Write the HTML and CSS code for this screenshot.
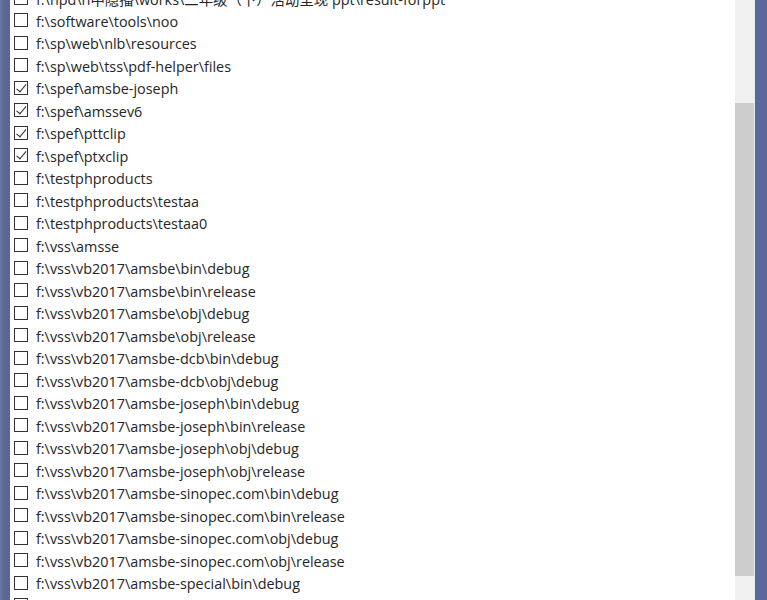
FILE: index.html
```html
<!DOCTYPE html>
<html>
<head>
<meta charset="utf-8">
<link rel="stylesheet" href="styles.css">
</head>
<body>
<div class="frame">
  <div class="edge edge-left"></div>
  <div class="list">
    <ul class="items">
      <li class="item"><span class="box"></span><span class="label">f:\hpd\n中隐播\works\二年级（下）活动呈现 ppt\result-forppt</span></li>
      <li class="item"><span class="box"></span><span class="label">f:\software\tools\noo</span></li>
      <li class="item"><span class="box"></span><span class="label">f:\sp\web\nlb\resources</span></li>
      <li class="item"><span class="box"></span><span class="label">f:\sp\web\tss\pdf-helper\files</span></li>
      <li class="item"><span class="box checked"></span><span class="label">f:\spef\amsbe-joseph</span></li>
      <li class="item"><span class="box checked"></span><span class="label">f:\spef\amssev6</span></li>
      <li class="item"><span class="box checked"></span><span class="label">f:\spef\pttclip</span></li>
      <li class="item"><span class="box checked"></span><span class="label">f:\spef\ptxclip</span></li>
      <li class="item"><span class="box"></span><span class="label">f:\testphproducts</span></li>
      <li class="item"><span class="box"></span><span class="label">f:\testphproducts\testaa</span></li>
      <li class="item"><span class="box"></span><span class="label">f:\testphproducts\testaa0</span></li>
      <li class="item"><span class="box"></span><span class="label">f:\vss\amsse</span></li>
      <li class="item"><span class="box"></span><span class="label">f:\vss\vb2017\amsbe\bin\debug</span></li>
      <li class="item"><span class="box"></span><span class="label">f:\vss\vb2017\amsbe\bin\release</span></li>
      <li class="item"><span class="box"></span><span class="label">f:\vss\vb2017\amsbe\obj\debug</span></li>
      <li class="item"><span class="box"></span><span class="label">f:\vss\vb2017\amsbe\obj\release</span></li>
      <li class="item"><span class="box"></span><span class="label">f:\vss\vb2017\amsbe-dcb\bin\debug</span></li>
      <li class="item"><span class="box"></span><span class="label">f:\vss\vb2017\amsbe-dcb\obj\debug</span></li>
      <li class="item"><span class="box"></span><span class="label">f:\vss\vb2017\amsbe-joseph\bin\debug</span></li>
      <li class="item"><span class="box"></span><span class="label">f:\vss\vb2017\amsbe-joseph\bin\release</span></li>
      <li class="item"><span class="box"></span><span class="label">f:\vss\vb2017\amsbe-joseph\obj\debug</span></li>
      <li class="item"><span class="box"></span><span class="label">f:\vss\vb2017\amsbe-joseph\obj\release</span></li>
      <li class="item"><span class="box"></span><span class="label">f:\vss\vb2017\amsbe-sinopec.com\bin\debug</span></li>
      <li class="item"><span class="box"></span><span class="label">f:\vss\vb2017\amsbe-sinopec.com\bin\release</span></li>
      <li class="item"><span class="box"></span><span class="label">f:\vss\vb2017\amsbe-sinopec.com\obj\debug</span></li>
      <li class="item"><span class="box"></span><span class="label">f:\vss\vb2017\amsbe-sinopec.com\obj\release</span></li>
      <li class="item"><span class="box"></span><span class="label">f:\vss\vb2017\amsbe-special\bin\debug</span></li>
      <li class="item"><span class="box"></span><span class="label">f:\vss\vb2017\amsbe-special\bin\release</span></li>
    </ul>
  </div>
  <div class="scrollbar"><div class="thumb"></div></div>
  <div class="divider"></div>
  <div class="edge edge-right"></div>
</div>
</body>
</html>
```
FILE: styles.css
```css
html, body {
  margin: 0;
  padding: 0;
  background: #ffffff;
}
.frame {
  display: flex;
  width: 767px;
  height: 600px;
  overflow: hidden;
}
.edge {
  flex: none;
  background: #5b6898;
}
.edge-left {
  width: 10px;
  background: linear-gradient(to right, #6e7aa6, #5a6796 40%, #5a6796);
}
.edge-right {
  width: 12px;
}
.list {
  flex: 1;
  overflow: hidden;
  background: #ffffff;
}
.items {
  list-style: none;
  margin: -12.75px 0 0 0;
  padding: 0 0 0 4px;
}
.item {
  height: 22.5px;
  display: flex;
  align-items: center;
  gap: 8px;
  font-family: "Open Sans", "Noto Sans CJK SC", sans-serif;
  font-size: 14.4px;
  color: #262626;
  white-space: nowrap;
}
.box {
  flex: none;
  width: 12px;
  height: 12px;
  border: 1px solid #333333;
  background: #ffffff;
  position: relative;
  top: -1px;
}
.box.checked::after {
  content: "";
  position: absolute;
  left: 3.5px;
  top: 0px;
  width: 4px;
  height: 8.5px;
  border-right: 1.3px solid #333333;
  border-bottom: 1.3px solid #333333;
  transform: rotate(40deg);
}
.scrollbar {
  flex: none;
  width: 19px;
  background: #f0f0f0;
  display: flex;
  flex-direction: column;
}
.thumb {
  margin-top: 103px;
  height: 473px;
  background: #cdcdcd;
}
.divider {
  flex: none;
  width: 1px;
  background: #e6e8ef;
}
```
